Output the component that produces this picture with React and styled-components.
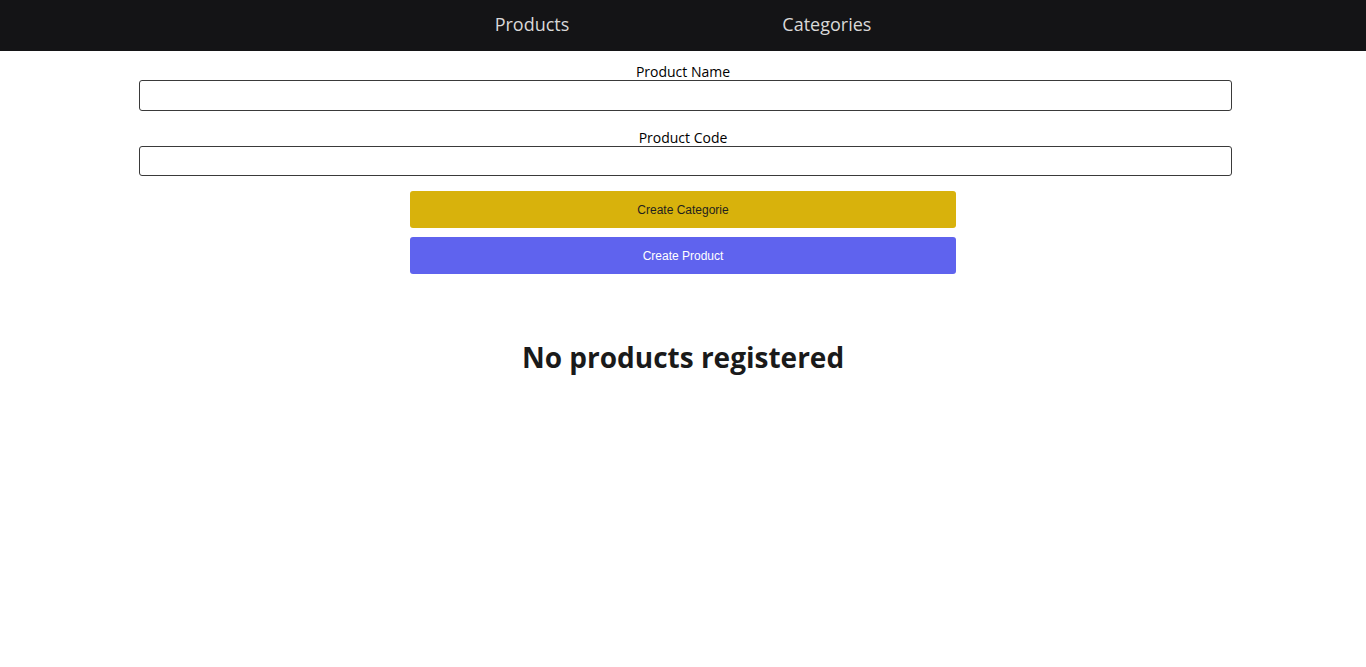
import styled, { createGlobalStyle } from "styled-components";

const GlobalStyle = createGlobalStyle`
  body {
    margin: 0;
    background: #ffffff;
    font-family: "Open Sans", "Noto Sans", sans-serif;
  }
`;

function App() {
  return (
    <>
      <GlobalStyle />
      <Nav>
        <NavLink>Products</NavLink>
        <NavLink>Categories</NavLink>
      </Nav>
      <Main>
        <Form onSubmit={(e) => e.preventDefault()}>
          <Field>
            <Label htmlFor="name">Product Name</Label>
            <Input id="name" type="text" />
          </Field>
          <Field $last>
            <Label htmlFor="code">Product Code</Label>
            <Input id="code" type="text" $height={30} />
          </Field>
          <Buttons>
            <Button type="button" $bg="#d8b20c" $color="#1f1f1f">
              Create Categorie
            </Button>
            <Button type="submit" $bg="#5f63ee" $color="#ffffff">
              Create Product
            </Button>
          </Buttons>
        </Form>
        <Empty>No products registered</Empty>
      </Main>
    </>
  );
}

const Nav = styled.nav`
  height: 51px;
  background-color: #141416;
  display: flex;
  align-items: center;
  justify-content: center;
  gap: 213px;
`;

const NavLink = styled.a`
  color: #d9d9d9;
  font-size: 18px;
  cursor: pointer;
  margin-bottom: 4px;
`;

const Main = styled.main`
  display: flex;
  flex-direction: column;
  align-items: center;
`;

const Form = styled.form`
  width: 1093px;
  margin-left: 5px;
  padding-top: 12px;
  display: flex;
  flex-direction: column;
  align-items: center;
`;

const Field = styled.div`
  width: 100%;
  display: flex;
  flex-direction: column;
  margin-bottom: ${(p) => (p.$last ? "15px" : "18px")};
`;

const Label = styled.label`
  text-align: center;
  font-size: 14px;
  line-height: 17px;
  color: #000000;
  margin-right: 5px;
`;

const Input = styled.input`
  box-sizing: border-box;
  width: 100%;
  height: ${(p) => p.$height || 31}px;
  border: 1px solid #3a3a3a;
  border-radius: 3px;
  padding: 0 8px;
  font-size: 14px;
`;

const Buttons = styled.div`
  width: 546px;
  margin-right: 5px;
  display: flex;
  flex-direction: column;
  gap: 9px;
`;

const Button = styled.button`
  height: 37px;
  border: none;
  border-radius: 3px;
  background-color: ${(p) => p.$bg};
  color: ${(p) => p.$color};
  font-family: "Liberation Sans", Arial, sans-serif;
  font-size: 12px;
  cursor: pointer;
`;

const Empty = styled.h2`
  margin: 64px 0 0;
  font-size: 28px;
  font-weight: 700;
  color: #1a1a1a;
`;

export default App;
